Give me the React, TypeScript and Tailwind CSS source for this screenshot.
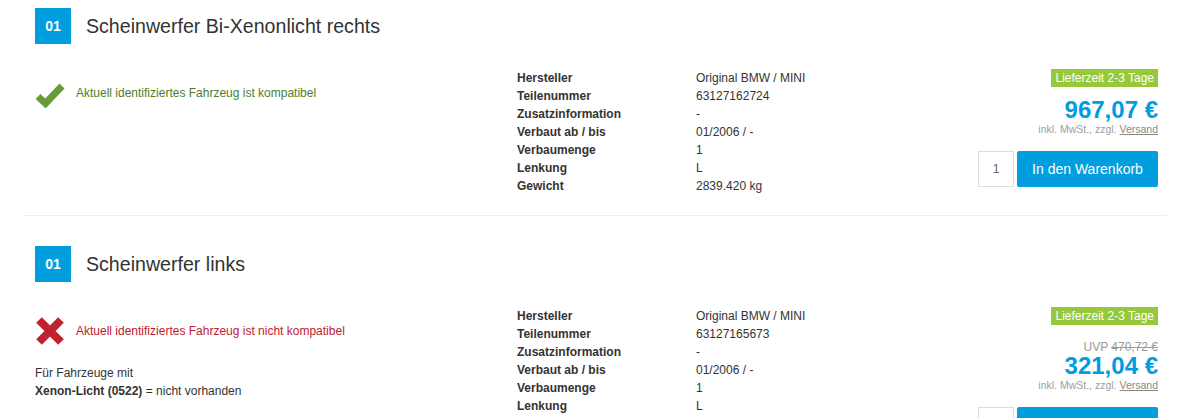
import React from "react";

type Spec = [string, string];

interface Part {
  pos: string;
  title: string;
  compatible: boolean;
  note?: { label: string; value: string };
  specs: Spec[];
  uvp?: string;
  price: string;
}

const PARTS: Part[] = [
  {
    pos: "01",
    title: "Scheinwerfer Bi-Xenonlicht rechts",
    compatible: true,
    specs: [
      ["Hersteller", "Original BMW / MINI"],
      ["Teilenummer", "63127162724"],
      ["Zusatzinformation", "-"],
      ["Verbaut ab / bis", "01/2006 / -"],
      ["Verbaumenge", "1"],
      ["Lenkung", "L"],
      ["Gewicht", "2839.420 kg"],
    ],
    price: "967,07 €",
  },
  {
    pos: "01",
    title: "Scheinwerfer links",
    compatible: false,
    note: { label: "Xenon-Licht (0522)", value: "= nicht vorhanden" },
    specs: [
      ["Hersteller", "Original BMW / MINI"],
      ["Teilenummer", "63127165673"],
      ["Zusatzinformation", "-"],
      ["Verbaut ab / bis", "01/2006 / -"],
      ["Verbaumenge", "1"],
      ["Lenkung", "L"],
      ["Gewicht", "2839.420 kg"],
    ],
    uvp: "470,72 €",
    price: "321,04 €",
  },
];

function CheckIcon() {
  return (
    <svg width="30" height="30" viewBox="0 0 30 30" className="shrink-0">
      <path
        d="M3 18.5 L10.5 25.5 L27 8"
        fill="none"
        stroke="#6a9a37"
        strokeWidth="7"
        strokeLinejoin="miter"
      />
    </svg>
  );
}

function CrossIcon() {
  return (
    <svg width="30" height="30" viewBox="0 0 30 30" className="shrink-0">
      <path
        d="M4 4 L26 26 M26 4 L4 26"
        fill="none"
        stroke="#c1222f"
        strokeWidth="8"
      />
    </svg>
  );
}

function PartRow({ part, last }: { part: Part; last: boolean }) {
  return (
    <section
      className={
        last
          ? "pl-[11px] pr-[9px] pt-[30px]"
          : "border-b border-[#eeeeee] pl-[11px] pr-[9px] pt-[8px] pb-[20px]"
      }
    >
      {/* Header */}
      <div className="flex items-center">
        <div className="flex h-[36px] w-[36px] items-center justify-center bg-[#009ddf] text-[14px] font-bold text-white">
          {part.pos}
        </div>
        <h2 className="ml-[15px] text-[19.6px] leading-[24px] text-[#333333]">
          {part.title}
        </h2>
      </div>

      <div className="mt-[24px] flex items-start">
        {/* Compatibility */}
        <div className="w-[482px] shrink-0">
          <div className="mt-[10px] flex items-center">
            {part.compatible ? <CheckIcon /> : <CrossIcon />}
            <span
              className={
                part.compatible
                  ? "ml-[11px] text-[12px] text-[#4e7d2a]"
                  : "ml-[11px] text-[12px] text-[#c0202f]"
              }
            >
              {part.compatible
                ? "Aktuell identifiziertes Fahrzeug ist kompatibel"
                : "Aktuell identifiziertes Fahrzeug ist nicht kompatibel"}
            </span>
          </div>
          {part.note && (
            <div className="mt-[18px] text-[12px] leading-[18px] text-[#333333]">
              <div>Für Fahrzeuge mit</div>
              <div>
                <span className="font-bold">{part.note.label}</span>{" "}
                {part.note.value}
              </div>
            </div>
          )}
        </div>

        {/* Specs */}
        <div className="grid grid-cols-[179px_auto] content-start pt-[1px] text-[12px] leading-[18px] text-[#333333]">
          {part.specs.map(([k, v]) => (
            <React.Fragment key={k}>
              <div className="font-bold">{k}</div>
              <div>{v}</div>
            </React.Fragment>
          ))}
        </div>

        {/* Buy box */}
        <div className="flex flex-1 flex-col items-end">
          <div className="mt-[1px] bg-[#96c83c] px-[4px] text-[12px] leading-[18px] text-white">
            Lieferzeit 2-3 Tage
          </div>
          {part.uvp && (
            <div className="mt-[15px] text-[12px] leading-[14px] text-[#999999]">
              UVP <span className="line-through">{part.uvp}</span>
            </div>
          )}
          <div
            className={
              part.uvp
                ? "text-[24px] font-bold leading-[24px] text-[#009ddf]"
                : "mt-[11px] text-[24px] font-bold leading-[24px] text-[#009ddf]"
            }
          >
            {part.price}
          </div>
          <div className="text-[10.5px] leading-[14px] text-[#a0a0a0]">
            inkl. MwSt., zzgl.{" "}
            <span className="text-[#888888] underline">Versand</span>
          </div>
          <div className="mt-[15px] flex">
            <div className="flex h-[36px] w-[36px] items-center justify-center border border-[#dddddd] text-[12px] text-[#666666]">
              1
            </div>
            <button
              type="button"
              className="ml-[3px] h-[36px] w-[141px] rounded-[2px] bg-[#009ddf] text-[14px] text-white"
            >
              In den Warenkorb
            </button>
          </div>
        </div>
      </div>
    </section>
  );
}

export default function App() {
  return (
    <div className="min-h-screen bg-white font-['Liberation_Sans',Arial,sans-serif]">
      <div className="mx-[24px] w-[1143px]">
        {PARTS.map((p, i) => (
          <PartRow key={p.title} part={p} last={i === PARTS.length - 1} />
        ))}
      </div>
    </div>
  );
}
